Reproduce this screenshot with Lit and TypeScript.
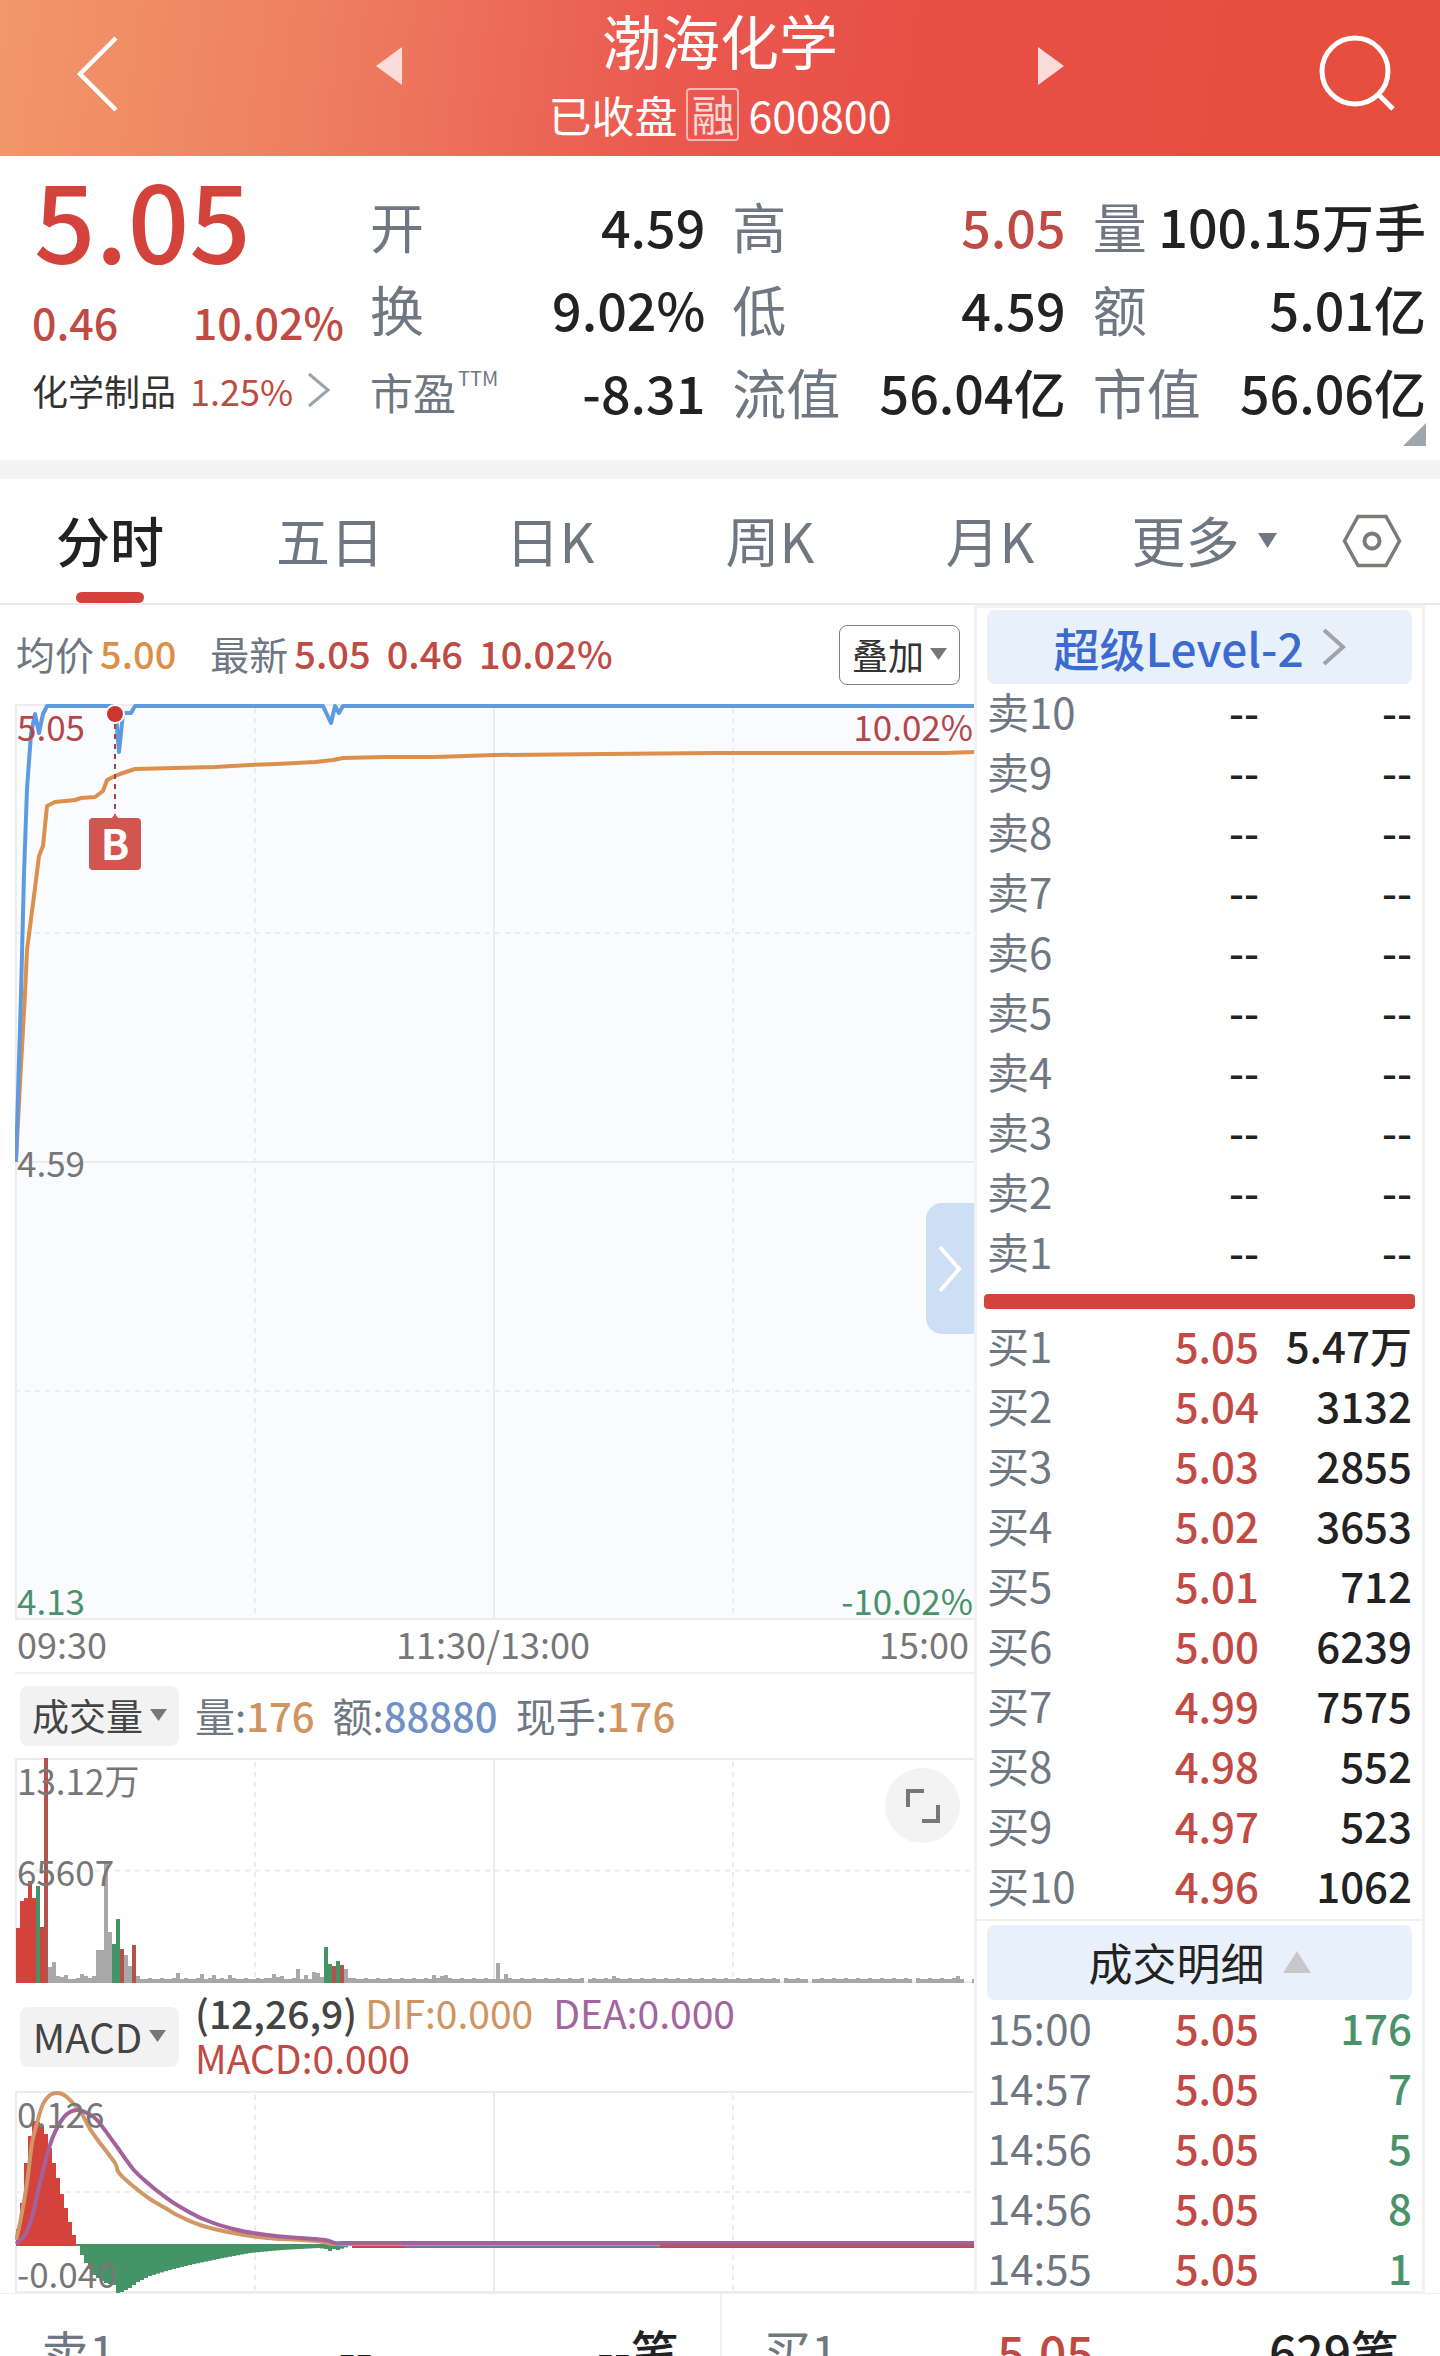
import { LitElement, html, svg, css } from "lit";
import { customElement, property, state } from "lit/decorators.js";
import { classMap } from "lit/directives/class-map.js";

type Tone = "up" | "down" | "flat";

interface Stat {
  label: string;
  sup?: string;
  value: string;
  tone?: Tone;
}

const STATS: Stat[] = [
  { label: "开", value: "4.59" },
  { label: "高", value: "5.05", tone: "up" },
  { label: "量", value: "100.15万手" },
  { label: "换", value: "9.02%" },
  { label: "低", value: "4.59" },
  { label: "额", value: "5.01亿" },
  { label: "市盈", sup: "TTM", value: "-8.31" },
  { label: "流值", value: "56.04亿" },
  { label: "市值", value: "56.06亿" },
];

const TABS = ["分时", "五日", "日K", "周K", "月K"];

type Row = [string, string, string];

const SELLS: Row[] = [10, 9, 8, 7, 6, 5, 4, 3, 2, 1].map((n): Row => [`卖${n}`, "--", "--"]);

const BUYS: Row[] = [
  ["买1", "5.05", "5.47万"],
  ["买2", "5.04", "3132"],
  ["买3", "5.03", "2855"],
  ["买4", "5.02", "3653"],
  ["买5", "5.01", "712"],
  ["买6", "5.00", "6239"],
  ["买7", "4.99", "7575"],
  ["买8", "4.98", "552"],
  ["买9", "4.97", "523"],
  ["买10", "4.96", "1062"],
];

const DEALS: Row[] = [
  ["15:00", "5.05", "176"],
  ["14:57", "5.05", "7"],
  ["14:56", "5.05", "5"],
  ["14:56", "5.05", "8"],
  ["14:55", "5.05", "1"],
];

/* Minutes of the session: 240 bars, one every four units. */
const RED = "#d3433b";
const THIN_RED = "#b4524b";
const GREEN = "#459468";
const GREY = "#a8a8a8";

const VOLUME: Record<number, [number, string]> = {
  0: [55, RED], 1: [82, RED], 2: [85, RED], 3: [102, RED], 4: [85, RED],
  5: [97, GREEN], 6: [56, RED], 7: [226, THIN_RED], 8: [16, GREY], 9: [21, GREY],
  10: [7, GREY], 11: [6, GREY], 12: [8, GREY], 16: [9, GREY], 17: [7, GREY],
  19: [7, GREY], 20: [33, GREY], 21: [33, GREY], 22: [121, GREY], 23: [51, GREY],
  24: [39, GREEN], 25: [64, GREEN], 26: [34, THIN_RED], 27: [28, GREY], 28: [17, GREY],
  29: [38, THIN_RED], 30: [7, GREY], 40: [10, GREY], 46: [9, GREY], 49: [8, GREY],
  53: [8, GREY], 62: [5, GREY], 64: [9, GREY], 65: [6, GREY], 66: [7, GREY],
  70: [14, GREY], 72: [8, GREY], 74: [11, GREY], 75: [10, GREY], 76: [6, GREY],
  77: [36, GREEN], 78: [19, GREEN], 79: [17, THIN_RED], 80: [22, GREEN], 81: [18, THIN_RED],
  82: [14, GREY], 83: [5, GREY], 104: [8, GREY], 106: [7, GREY], 107: [8, GREY],
  120: [20, GREY], 122: [9, GREY], 149: [7, GREY], 235: [7, GREY],
};
const NO_TRADES = new Set([142, 191, 198, 224, 237, 238]);

const MACD_UP = [17, 43, 83, 110, 125, 124, 120, 112, 98, 83, 68, 52, 38, 24, 11];
const MACD_DOWN: [number, number][] = [
  [15, 1], [16, 10], [17, 18], [18, 24], [19, 30], [20, 33], [21, 36], [22, 38], [24, 40],
  [25, 49], [26, 47], [28, 43], [30, 37], [33, 31], [38, 25], [43, 20], [50, 14],
  [58, 8], [66, 5], [75, 3], [77, 4], [78, 6], [79, 4], [80, 5], [83, 1],
];

function interpolate(points: [number, number][], x: number): number {
  for (let i = 1; i < points.length; i++) {
    const [x0, y0] = points[i - 1];
    const [x1, y1] = points[i];
    if (x <= x1) return y0 + ((y1 - y0) * (x - x0)) / (x1 - x0);
  }
  return 0;
}

/* Smooth curve through a list of points, then level to the right edge. */
function curve(points: [number, number][]): string {
  let d = `M${points[0][0]} ${points[0][1]}`;
  for (let i = 0; i < points.length - 1; i++) {
    const p0 = points[Math.max(0, i - 1)];
    const p1 = points[i];
    const p2 = points[i + 1];
    const p3 = points[Math.min(points.length - 1, i + 2)];
    const c = [
      p1[0] + (p2[0] - p0[0]) / 6, p1[1] + (p2[1] - p0[1]) / 6,
      p2[0] - (p3[0] - p1[0]) / 6, p2[1] - (p3[1] - p1[1]) / 6,
      p2[0], p2[1],
    ].map((v) => v.toFixed(1));
    d += `C${c.join(" ")}`;
  }
  return `${d}H959`;
}

const DIF: [number, number][] = [
  [1, 149], [5, 132], [12, 92], [17, 52], [22, 32], [28, 13], [35, 4], [42, 2], [49, 4],
  [57, 11], [67, 23], [75, 38], [85, 52], [100, 72], [104, 82], [118, 95], [135, 108],
  [152, 118], [162, 124], [185, 134], [218, 142], [252, 147], [285, 149], [308, 151],
  [318, 153], [328, 153],
];
const DEA: [number, number][] = [
  [1, 153], [10, 144], [17, 126], [25, 92], [35, 54], [42, 37], [49, 26], [55, 21],
  [63, 19], [72, 22], [82, 29], [100, 53], [118, 78], [135, 94], [145, 102], [162, 114],
  [188, 128], [218, 138], [252, 144], [285, 147], [310, 149], [320, 152], [330, 152],
];

@customElement("order-table")
export class OrderTable extends LitElement {
  @property({ attribute: false }) rows: Row[] = [];
  @property() priceTone: Tone = "flat";
  @property() volumeTone: Tone = "flat";
  @property() caption = "";

  static styles = css`
    :host { display: block; }
    .book { width: 100%; border-collapse: collapse; table-layout: fixed; }
    .level { width: 27%; text-align: left; font-weight: 400; color: #6f7882; }
    .price { width: 37%; }
    .cell { text-align: right; font-weight: 500; }
    .level, .cell { height: 54px; padding: 0 0 6px; line-height: 54px; font-size: 42px; white-space: nowrap; }
    .flat { color: #222; }
    .up { color: #c14b44; }
    .down { color: #4b926a; }
  `;

  render() {
    return html`<table class="book" aria-label=${this.caption}>
      <tbody>
        ${this.rows.map(
          ([level, price, volume]) => html`<tr>
            <th class="level" scope="row">${level}</th>
            <td class="cell price ${this.priceTone}">${price}</td>
            <td class="cell ${this.volumeTone}">${volume}</td>
          </tr>`,
        )}
      </tbody>
    </table>`;
  }
}

@customElement("app-root")
export class AppRoot extends LitElement {
  @state() private tab = 0;

  static styles = css`
    :host {
      display: flex;
      flex-direction: column;
      height: 100vh;
      overflow: hidden;
      background: #fff;
      color: #222;
      font-family: "Noto Sans CJK SC", "Noto Sans", sans-serif;
      white-space: nowrap;
    }
    * { box-sizing: border-box; }
    svg { display: block; }
    button { border: 0; padding: 0; margin: 0; background: none; font: inherit; color: inherit; cursor: pointer; }
    .up { color: #c14b44; }
    .strong { font-weight: 500; }

    .header {
      display: grid;
      grid-template-columns: 402fr 636fr 402fr;
      flex: none;
      height: 156px;
      color: #fff;
      background: linear-gradient(97deg, #f2976b 0%, #ee7f60 22%, #ea5850 47%, #e85046 62%, #e54e3c 100%);
    }
    .head-side { display: flex; align-items: center; justify-content: space-between; padding: 0 0 8px 70px; }
    .head-side.right { padding: 0 40px 8px 0; }
    .arrow { padding-bottom: 16px; }
    .head-mid { display: flex; flex-direction: column; align-items: center; }
    .title { margin: 0; font-size: 59px; line-height: 80px; font-weight: 400; }
    .sub { display: flex; align-items: center; gap: 9px; font-size: 43px; line-height: 68px; }
    .margin-tag { width: 53px; height: 53px; border: 2px solid #f7b5b0; border-radius: 4px; font-size: 43px; line-height: 46px; text-align: center; color: #fbd8d5; }

    .summary {
      display: grid;
      grid-template-columns: 338fr 1056fr;
      flex: none;
      height: 304px;
      padding: 0 14px 0 32px;
    }
    .last { display: flex; flex-direction: column; }
    .last-price { padding: 2px 0 0 2px; font-size: 108px; line-height: 116px; color: #d3433b; font-weight: 500; }
    .change { display: flex; justify-content: space-between; padding: 12px 26px 0 0; font-size: 43px; line-height: 70px; font-weight: 500; }
    .sector { display: flex; align-items: center; gap: 14px; font-size: 36px; line-height: 68px; color: #333; text-align: left; }
    .stats {
      display: grid;
      grid-template-columns: 335fr 333fr 333fr;
      grid-auto-rows: 83px;
      column-gap: 27px;
      margin: 0;
      padding-top: 28px;
      position: relative;
    }
    .stat { display: flex; justify-content: space-between; line-height: 83px; }
    .stat-label { font-size: 54px; color: #6f7882; }
    .stat-label.small { display: flex; font-size: 43px; }
    .stat-sup { font-size: 20px; line-height: 56px; padding-left: 2px; }
    .stat-value { margin: 0; font-size: 52px; font-weight: 500; }
    .corner { position: absolute; right: 0; bottom: 14px; }

    .tabs {
      display: grid;
      grid-template-columns: repeat(5, 220fr) 208fr 132fr;
      flex: none;
      height: 145px;
      border-top: 19px solid #f4f4f4;
      border-bottom: 2px solid #ebebeb;
    }
    .tab { display: flex; flex-direction: column; align-items: center; justify-content: flex-end; font-size: 54px; line-height: 78px; color: #6f7882; }
    .tab::after { content: ""; width: 68px; height: 11px; margin-top: 13px; border-radius: 6px; }
    .tab.on { color: #222; font-weight: 500; }
    .tab.on::after { background: #d3433b; }
    .more { display: flex; align-items: center; justify-content: center; gap: 18px; font-size: 54px; line-height: 80px; padding-bottom: 2px; color: #6f7882; }
    .gear { display: flex; align-items: center; justify-content: center; padding-right: 4px; }

    .board { display: grid; grid-template-columns: 959fr 451fr; flex: none; padding: 0 15px; }
    .charts { min-width: 0; display: flex; flex-direction: column; }
    .legend { display: flex; align-items: center; height: 99px; padding: 0 14px 0 1px; font-size: 39px; color: #6f7882; }
    .legend-text { display: flex; flex: 1; padding-bottom: 4px; }
    .legend-item { padding-left: 6px; font-size: 38px; font-weight: 500; }
    .gap { padding-left: 16px; }
    .avg { color: #dd8f48; padding-right: 34px; }
    .overlay-btn { display: flex; align-items: center; justify-content: center; gap: 6px; width: 121px; height: 60px; padding-bottom: 2px; border: 1px solid #7e8082; border-radius: 8px; font-size: 36px; line-height: 52px; color: #333; }

    .plot { position: relative; }
    .plot svg.area { width: 100%; }
    .tag { position: absolute; font-size: 35px; line-height: 40px; color: #777; }
    .tl { left: 2px; top: 2px; }
    .tr { right: 1px; top: 2px; }
    .ml { left: 2px; top: 50%; transform: translateY(-50%); }
    .bl { left: 2px; bottom: 0; }
    .br { right: 1px; bottom: 0; }
    .red { color: #b4474a; }
    .green { color: #4b926a; }
    .marker { position: absolute; left: 74px; top: 114px; width: 52px; height: 52px; border-radius: 4px; background: #d15650; color: #fff; font-size: 42px; font-weight: 700; line-height: 48px; text-align: center; }
    .slide { position: absolute; right: 0; top: 499px; display: flex; align-items: center; justify-content: center; width: 48px; height: 131px; border-radius: 16px 0 0 16px; background: #cddff5; }
    .expand { position: absolute; right: 14px; top: 10px; display: flex; align-items: center; justify-content: center; width: 75px; height: 75px; border-radius: 50%; background: #f3f3f3; }

    .axis { display: flex; justify-content: space-between; height: 54px; padding: 0 5px 0 2px; border-bottom: 2px solid #f0f0f0; font-size: 36px; line-height: 46px; color: #777; }
    .indicator { display: flex; align-items: center; gap: 16px; padding-left: 5px; }
    .indicator.vol { height: 84px; }
    .indicator.macd { height: 108px; }
    .pick { display: flex; align-items: center; justify-content: center; gap: 7px; width: 159px; height: 60px; padding-bottom: 2px; border-radius: 8px; background: #f2f2f2; color: #444; font-size: 37px; line-height: 52px; }
    .latin { font-size: 40px; }
    .readout { display: flex; gap: 18px; padding-bottom: 2px; font-size: 40px; line-height: 52px; color: #6f7882; }
    .params { display: flex; flex-direction: column; padding-bottom: 4px; font-size: 39px; line-height: 45px; color: #444; }
    .line { display: flex; gap: 8px; }
    .dea { padding-left: 12px; color: #a4649f; }
    .orange { color: #cf9461; }
    .blue { color: #7090c6; }

    .panel { display: flex; flex-direction: column; padding: 2px 10px 0; border: 3px solid #f2f2f3; border-bottom-width: 2px; }
    .bar-btn { display: flex; align-items: center; justify-content: center; gap: 18px; height: 74px; border-radius: 8px; background: #e8f0fb; font-size: 44px; line-height: 64px; }
    .level2 { color: #3b6bd0; font-size: 46px; font-weight: 500; }
    .detail { height: 75px; padding-bottom: 2px; color: #222; }
    .ratio { height: 15px; margin: 10px -3px 9px; border-radius: 4px; background: #d3433b; }
    .split { height: 2px; margin: 1px -10px 4px; background: #f0f0f0; }
    .deals { margin-bottom: -9px; }

    .best { display: grid; grid-template-columns: 1fr 1fr; flex: 1; min-height: 0; overflow: hidden; border-top: 1px solid #f0f0f0; }
    .side { display: grid; grid-template-columns: 26fr 26fr 48fr; padding: 20px 41px 0; font-size: 48px; line-height: 72px; text-align: right; font-weight: 500; }
    .side + .side { border-left: 2px solid #f0f0f0; }
    .side-name { text-align: left; color: #6f7882; font-weight: 400; }
  `;

  private caret(w: number, h: number, fill: string, up = false) {
    const d = up ? `M${w / 2} 0L${w} ${h}H0Z` : `M0 0H${w}L${w / 2} ${h}Z`;
    return html`<svg width=${w} height=${h} viewBox="0 0 ${w} ${h}" aria-hidden="true"><path d=${d} fill=${fill} /></svg>`;
  }

  private chevron(w: number, h: number, stroke: string, sw: number) {
    return html`<svg width=${w} height=${h} viewBox="0 0 ${w} ${h}" fill="none" aria-hidden="true">
      <path d="M2 2L${w - 3} ${h / 2}L2 ${h - 2}" stroke=${stroke} stroke-width=${sw} />
    </svg>`;
  }

  private grid(h: number, solidMiddle: boolean) {
    const rows = solidMiddle ? [h / 4, (h * 3) / 4] : [h / 2];
    return svg`
      <g stroke="#ececef" stroke-width="2" fill="none">
        <path d="M1 0V${h}M479 0V${h}M0 1H959M0 ${h - 1}H959" />
        ${solidMiddle ? svg`<path d=${`M0 ${h / 2}H959`} />` : ""}
        <path stroke-dasharray="5 5" d=${`M240 4V${h}M718 4V${h}` + rows.map((y) => `M0 ${y}H959`).join("")} />
      </g>`;
  }

  private priceChart() {
    return html`<svg class="area" height="916" viewBox="0 0 959 916" preserveAspectRatio="none" role="img" aria-label="分时走势">
      <rect width="959" height="916" fill="#fafbff" />
      ${this.grid(916, true)}
      <path fill="none" stroke="#dd8f4c" stroke-width="4" stroke-linejoin="round"
        d="M1 456L5 380L10 290L12 246L16 215L20 184L24 152L28 142L32 102L40 98L60 96L66 94L80 93L88 87L92 76L98 73L105 70L120 65L160 64L200 63L235 61L262 60L300 58L318 56L328 54L370 53L420 53L480 51L590 50L700 49L930 49L959 48" />
      <path fill="none" stroke="#5e9ae0" stroke-width="4" stroke-linejoin="round"
        d="M1 458L6 290L9 170L12 85L16 30L20 10L24 29L28 10L32 2H99L101 12L104 48L108 9H116L120 2H308L316 19L320 2L324 9L328 2H959" />
      <path stroke="#a8404a" stroke-width="2" stroke-dasharray="5 5" d="M100 20V112" />
      <circle cx="100" cy="10" r="9" fill="#c93730" stroke="#fff" stroke-width="2" />
      <path fill="#d15650" d="M96 115L100 110L104 115Z" />
    </svg>`;
  }

  private volumeChart() {
    const bars = Array.from({ length: 240 }, (_, i) => {
      if (NO_TRADES.has(i)) return "";
      const [h, fill] = VOLUME[i] ?? [i % 3 ? 4 : 5, GREY];
      return svg`<rect x=${1 + i * 4} y=${225 - h} width="4" height=${h} fill=${fill} />`;
    });
    return html`<svg class="area" height="225" viewBox="0 0 959 225" preserveAspectRatio="none" role="img" aria-label="成交量">
      ${this.grid(225, false)} ${bars}
    </svg>`;
  }

  private macdChart() {
    const up = MACD_UP.map((h, i) => svg`<rect x=${1 + i * 4} y=${155 - h} width="4" height=${h} fill=${RED} />`);
    const down = Array.from({ length: 69 }, (_, k) => {
      const i = k + 15;
      return svg`<rect x=${1 + i * 4} y="153" width="4" height=${interpolate(MACD_DOWN, i) + 1} fill=${GREEN} />`;
    });
    return html`<svg class="area" height="202" viewBox="0 0 959 202" preserveAspectRatio="none" role="img" aria-label="MACD">
      ${this.grid(202, false)} ${up} ${down}
      <path stroke=${RED} stroke-width="2" d="M337 156H390M645 156H959" />
      <path stroke="#6c7f7c" stroke-width="2" d="M390 156H645" />
      <path fill="none" stroke="#cf9866" stroke-width="4" d=${curve(DIF)} />
      <path fill="none" stroke="#a3629c" stroke-width="4" d=${curve(DEA)} />
      <path stroke="#a85a80" stroke-width="3" d="M645 154H959" />
    </svg>`;
  }

  render() {
    return html`
      <header class="header">
        <div class="head-side">
          <button aria-label="返回">
            <svg width="54" height="82" viewBox="0 0 54 82" fill="none"><path d="M46 5L10 41L46 77" stroke="#fff" stroke-width="4.5" /></svg>
          </button>
          <button class="arrow" aria-label="上一只">
            <svg width="26" height="38" viewBox="0 0 26 38"><path d="M26 0V38L0 19Z" fill="#fbdcd9" /></svg>
          </button>
        </div>
        <div class="head-mid">
          <h1 class="title">渤海化学</h1>
          <div class="sub"><span>已收盘</span><span class="margin-tag">融</span><span>600800</span></div>
        </div>
        <div class="head-side right">
          <button class="arrow" aria-label="下一只">
            <svg width="26" height="38" viewBox="0 0 26 38"><path d="M0 0V38L26 19Z" fill="#fbdcd9" /></svg>
          </button>
          <button aria-label="搜索">
            <svg width="82" height="82" viewBox="0 0 82 82" fill="none" stroke="#fff" stroke-width="5">
              <circle cx="37" cy="38" r="33" /><path d="M60 61L75 76" />
            </svg>
          </button>
        </div>
      </header>

      <section class="summary">
        <div class="last up">
          <div class="last-price">5.05</div>
          <div class="change"><span>0.46</span><span>10.02%</span></div>
          <button class="sector"><span>化学制品</span><span class="up">1.25%</span>${this.chevron(24, 36, "#9aa3ad", 3)}</button>
        </div>
        <dl class="stats">
          ${STATS.map(
            (s) => html`<div class="stat">
              <dt class="stat-label ${classMap({ small: !!s.sup })}">${s.label}${s.sup ? html`<span class="stat-sup">${s.sup}</span>` : ""}</dt>
              <dd class="stat-value ${s.tone ?? ""}">${s.value}</dd>
            </div>`,
          )}
          <svg class="corner" width="23" height="23" viewBox="0 0 23 23" aria-hidden="true"><path d="M23 0V23H0Z" fill="#9ea5ae" /></svg>
        </dl>
      </section>

      <nav class="tabs">
        ${TABS.map(
          (t, i) => html`<button class="tab ${classMap({ on: this.tab === i })}" @click=${() => (this.tab = i)}>${t}</button>`,
        )}
        <button class="more"><span>更多</span>${this.caret(19, 15, "#6f7882")}</button>
        <button class="gear" aria-label="设置">
          <svg width="60" height="54" viewBox="0 0 60 54" fill="none" stroke="#7b7b78" stroke-width="3.5">
            <path d="M16 2.5H44L57.5 27L44 51.5H16L2.5 27Z" /><circle cx="30" cy="27" r="7.5" stroke-width="4" />
          </svg>
        </button>
      </nav>

      <main class="board">
        <section class="charts">
          <div class="legend">
            <div class="legend-text">
              <span>均价</span><span class="legend-item avg">5.00</span>
              <span>最新</span><span class="legend-item up">5.05</span>
              <span class="legend-item up gap">0.46</span><span class="legend-item up gap">10.02%</span>
            </div>
            <button class="overlay-btn"><span>叠加</span>${this.caret(17, 12, "#777")}</button>
          </div>
          <div class="plot">
            ${this.priceChart()}
            <span class="tag tl red">5.05</span><span class="tag tr red">10.02%</span>
            <span class="tag ml">4.59</span>
            <span class="tag bl green">4.13</span><span class="tag br green">-10.02%</span>
            <span class="marker">B</span>
            <button class="slide" aria-label="收起盘口">${this.chevron(24, 48, "#fff", 4)}</button>
          </div>
          <div class="axis"><span>09:30</span><span>11:30/13:00</span><span>15:00</span></div>
          <div class="indicator vol">
            <button class="pick"><span>成交量</span>${this.caret(17, 12, "#777")}</button>
            <div class="readout">
              <span>量:<span class="strong orange">176</span></span>
              <span>额:<span class="strong blue">88880</span></span>
              <span>现手:<span class="strong orange">176</span></span>
            </div>
          </div>
          <div class="plot">
            ${this.volumeChart()}
            <span class="tag tl">13.12万</span><span class="tag ml">65607</span>
            <button class="expand" aria-label="全屏">
              <svg width="34" height="34" viewBox="0 0 34 34" fill="none" stroke="#777" stroke-width="4"><path d="M2 18V2H18M32 16V32H16" /></svg>
            </button>
          </div>
          <div class="indicator macd">
            <button class="pick latin"><span>MACD</span>${this.caret(17, 12, "#777")}</button>
            <div class="params">
              <div class="line">
                <span class="strong">(12,26,9)</span><span class="orange">DIF:0.000</span><span class="dea">DEA:0.000</span>
              </div>
              <div class="line up">MACD:0.000</div>
            </div>
          </div>
          <div class="plot">
            ${this.macdChart()}
            <span class="tag tl">0.126</span><span class="tag bl">-0.040</span>
          </div>
        </section>

        <aside class="panel">
          <button class="bar-btn level2"><span>超级Level-2</span>${this.chevron(24, 38, "#a0a4aa", 4)}</button>
          <order-table .rows=${SELLS} caption="卖盘"></order-table>
          <div class="ratio"></div>
          <order-table .rows=${BUYS} priceTone="up" caption="买盘"></order-table>
          <div class="split"></div>
          <button class="bar-btn detail"><span>成交明细</span>${this.caret(28, 22, "#c8c8c8", true)}</button>
          <order-table class="deals" .rows=${DEALS} priceTone="up" volumeTone="down" caption="成交明细"></order-table>
        </aside>
      </main>

      <footer class="best">
        <div class="side"><span class="side-name">卖1</span><span>--</span><span>--笔</span></div>
        <div class="side"><span class="side-name">买1</span><span class="up">5.05</span><span>629笔</span></div>
      </footer>
    `;
  }
}
